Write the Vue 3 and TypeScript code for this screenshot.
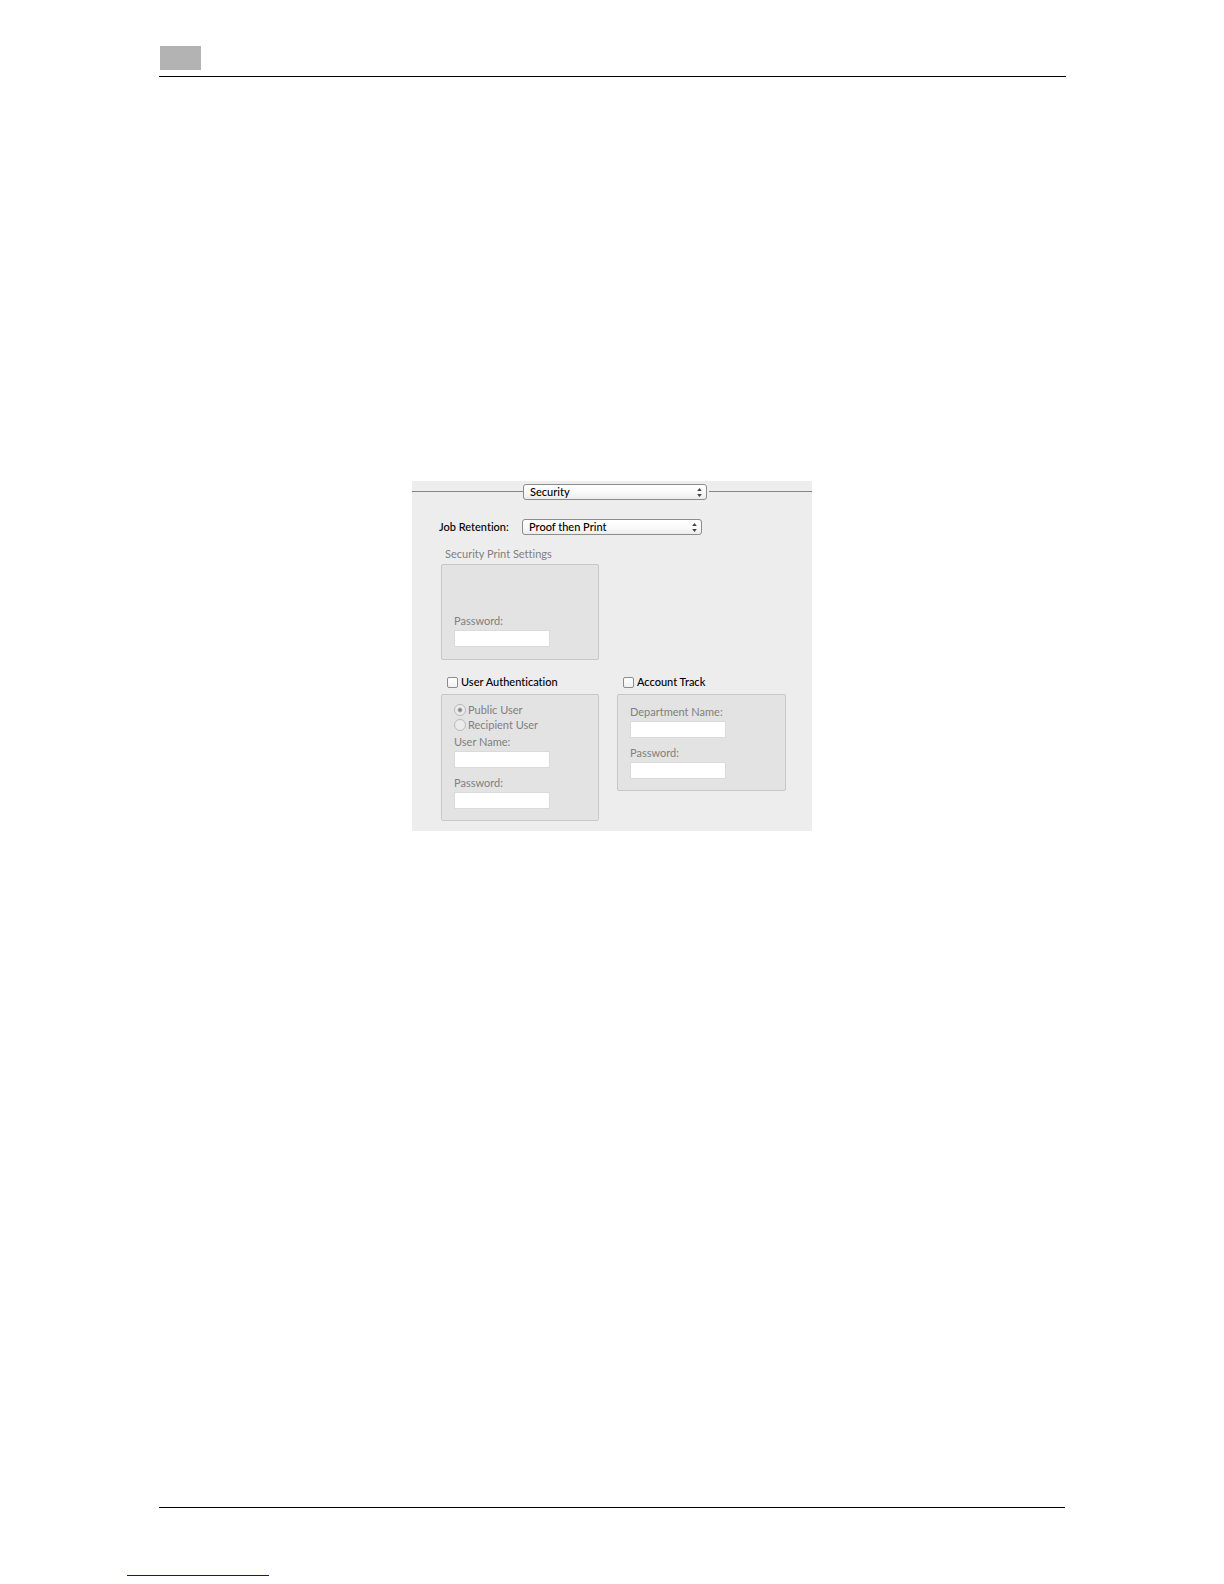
<script setup lang="ts">
import { ref } from 'vue'

const pane = ref('Security')
const retention = ref('Proof then Print')
const userAuth = ref(false)
const accountTrack = ref(false)
const userType = ref('public')
</script>

<template>
  <div class="page">
    <header class="page-head">
      <div class="chapter"></div>
    </header>

    <main>
      <form class="dialog" @submit.prevent>
        <div class="pane-row">
          <span class="rule lead"></span>
          <span class="popup pane">
            <select v-model="pane" aria-label="Pane">
              <option>Security</option>
            </select>
            <svg viewBox="0 0 5 9" aria-hidden="true"><path d="M2.5 0L4.8 3H.2zM2.5 9L4.8 6H.2z" /></svg>
          </span>
          <span class="rule"></span>
        </div>

        <div class="retention-row">
          <label for="retention">Job Retention:</label>
          <span class="popup">
            <select id="retention" v-model="retention">
              <option>Proof then Print</option>
            </select>
            <svg viewBox="0 0 5 9" aria-hidden="true"><path d="M2.5 0L4.8 3H.2zM2.5 9L4.8 6H.2z" /></svg>
          </span>
        </div>

        <section class="print-settings">
          <h2>Security Print Settings</h2>
          <div class="group print-group">
            <label class="field" for="print-password">Password:</label>
            <input id="print-password" type="password" disabled />
          </div>
        </section>

        <div class="columns">
          <section class="auth">
            <label class="toggle"><input v-model="userAuth" type="checkbox" />User Authentication</label>
            <div class="group auth-group">
              <div class="choices">
                <label class="choice"><input v-model="userType" type="radio" name="user-type" value="public" disabled />Public User</label>
                <label class="choice"><input v-model="userType" type="radio" name="user-type" value="recipient" disabled />Recipient User</label>
              </div>
              <label class="field" for="user-name">User Name:</label>
              <input id="user-name" type="text" disabled />
              <label class="field next" for="user-password">Password:</label>
              <input id="user-password" type="password" disabled />
            </div>
          </section>

          <section class="track">
            <label class="toggle"><input v-model="accountTrack" type="checkbox" />Account Track</label>
            <div class="group track-group">
              <label class="field" for="department">Department Name:</label>
              <input id="department" type="text" disabled />
              <label class="field next" for="account-password">Password:</label>
              <input id="account-password" type="password" disabled />
            </div>
          </section>
        </div>
      </form>
    </main>

    <footer>
      <div class="foot-rule"></div>
      <a class="foot-link" href="#" aria-label="Website"></a>
    </footer>
  </div>
</template>

<style>
body {
  margin: 0;
  background: #fff;
}
</style>

<style scoped>
.page {
  box-sizing: border-box;
  min-height: 100vh;
  padding: 46px 0 8px;
  display: flex;
  flex-direction: column;
  font-family: Lato, "Noto Sans", sans-serif;
  font-size: 11px;
  font-weight: 500;
  font-variant-ligatures: none;
  line-height: 16px;
  color: #000;
}

.page-head {
  margin: 0 158px 0 159px;
  padding: 0 1px 6px;
  border-bottom: 1px solid #000;
}

.chapter {
  width: 41px;
  height: 24px;
  background: #b3b3b3;
}

main {
  flex: 1;
  display: flex;
  justify-content: center;
  align-items: flex-start;
  padding: 404px 0 40px;
}

.dialog {
  box-sizing: border-box;
  width: 400px;
  padding: 3px 0 10px;
  background: #ededed;
}

.pane-row {
  display: flex;
  align-items: center;
}

.rule {
  flex: 1;
  height: 1px;
  margin-bottom: 1px;
  background: #858585;
}

.lead {
  flex: 0 0 111px;
}

.popup {
  position: relative;
  display: flex;
  width: 180px;
}

.pane {
  width: 184px;
  margin: 0 2px 0 0;
}

.popup select {
  appearance: none;
  box-sizing: border-box;
  width: 100%;
  height: 16px;
  margin: 0;
  padding: 0 20px 0 6px;
  border: 1px solid #8c8c8c;
  border-radius: 3px;
  background: linear-gradient(#fff, #fafafa 50%, #ececec);
  font: inherit;
  line-height: 14px;
  color: #000;
}

.popup svg {
  position: absolute;
  right: 5px;
  top: 4px;
  width: 5px;
  height: 9px;
  fill: #444;
  pointer-events: none;
}

.retention-row {
  display: flex;
  align-items: center;
  gap: 14px;
  margin: 19px 0 0 27px;
}

.retention-row label {
  width: 69px;
  white-space: nowrap;
}

.print-settings {
  margin: 11px 0 0 29px;
}

h2 {
  margin: 0 0 2px 4px;
  font-size: 11px;
  font-weight: 400;
  color: #808080;
}

.group {
  box-sizing: border-box;
  display: flex;
  flex-direction: column;
  border: 1px solid #c8c8c8;
  border-radius: 2px;
  background: #e3e3e3;
  font-weight: 400;
  color: #808080;
}

.group input[type="text"],
.group input[type="password"] {
  box-sizing: border-box;
  width: 96px;
  height: 17px;
  margin: 0;
  padding: 0 3px;
  border: 1px solid #dadada;
  border-radius: 0;
  background: #fff;
  font: inherit;
}

.field {
  margin-bottom: 1px;
}

.next {
  margin-top: 7px;
}

.print-group {
  width: 158px;
  padding: 48px 12px 12px;
}

.columns {
  display: flex;
  gap: 18px;
  margin: 14px 0 0 29px;
}

.auth {
  width: 158px;
}

.track {
  width: 169px;
}

.toggle {
  display: flex;
  align-items: center;
  gap: 3px;
  margin: 0 0 4px 6px;
}

.toggle input {
  appearance: none;
  box-sizing: border-box;
  width: 11px;
  height: 11px;
  margin: 0;
  border: 1px solid #8c8c8c;
  border-radius: 2px;
  background: linear-gradient(#fff, #f0f0f0);
}

.auth-group {
  padding: 7px 12px 11px;
}

.choices {
  margin-bottom: 2px;
}

.choice {
  display: flex;
  align-items: center;
  gap: 2px;
  height: 15px;
}

.choice input {
  appearance: none;
  box-sizing: border-box;
  width: 12px;
  height: 12px;
  margin: 0;
  border: 1px solid #b9b9b9;
  border-radius: 50%;
  background: #ececec;
}

.choice input:checked {
  background: radial-gradient(circle, #808080 0 1px, #ececec 3px);
}

.track-group {
  padding: 9px 12px 11px;
}

.foot-rule {
  height: 1px;
  margin: 0 159px 67px;
  background: #000;
}

.foot-link {
  display: block;
  width: 142px;
  margin-left: 127px;
  border-bottom: 1px solid #12129a;
}
</style>
